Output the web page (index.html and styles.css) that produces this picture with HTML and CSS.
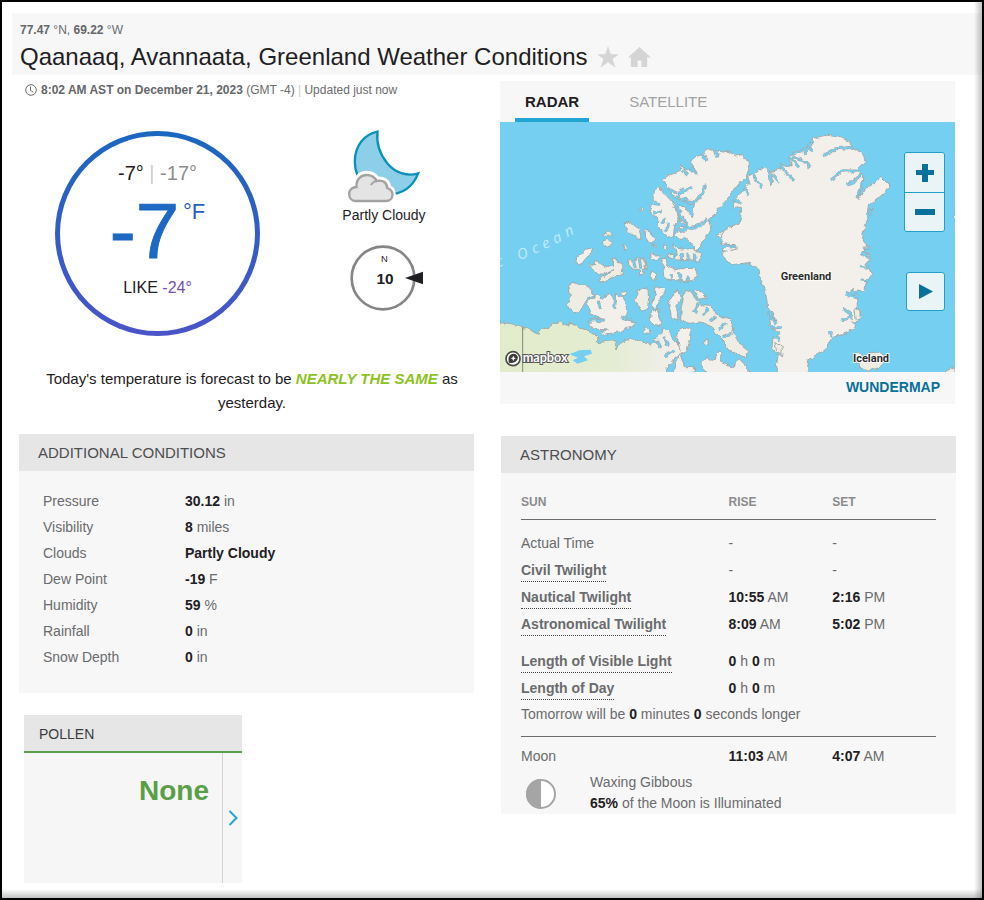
FILE: index.html
```html
<!DOCTYPE html>
<html lang="en">
<head>
<meta charset="utf-8">
<title>Qaanaaq, Avannaata, Greenland Weather Conditions</title>
<link rel="stylesheet" href="styles.css">
</head>
<body>
<div class="frame">
  <header class="place">
    <p class="coords"><b>77.47</b> °N, <b>69.22</b> °W</p>
    <div class="title-row">
      <h1>Qaanaaq, Avannaata, Greenland Weather Conditions</h1>
      <button class="icon-button" aria-label="Favorite"><svg width="22" height="22" viewBox="0 0 24 24"><path d="M12 0l3 9h9l-7 5.300 3 9.200-8-5.800-8 5.800 3-9.200L0 9h9z"/></svg></button>
      <button class="icon-button" aria-label="Set as home"><svg width="23" height="23" viewBox="0 0 24 24"><path d="M12 1L0 12h3v10h7v-7h4v7h6V12h4l-4-3.600z"/></svg></button>
    </div>
  </header>

  <main class="columns">
    <div class="column">
      <p class="stamp">
        <svg width="12" height="12" viewBox="0 0 12 12"><circle cx="6" cy="6" r="5.300"/><path d="M5.500 2.500v4l2.800 1.500"/></svg>
        <span><b>8:02 AM AST on December 21, 2023</b> (GMT -4) <i>|</i> Updated just now</span>
      </p>
      <section class="current">
        <div class="dial">
          <p class="hi-lo">-7° <i>|</i> <span>-17°</span></p>
          <p class="temp">-7<sup>°F</sup></p>
          <p class="feels">LIKE <span>-24°</span></p>
        </div>
        <div class="sky">
          <svg width="77" height="75" viewBox="80 40 230 225">
            <path d="M174 51C135 59 106 92 106 141c0 58 45 98 98 98 44 0 75-20 92-63-30 10-67 0-91-28-22-26-35-62-31-97z" fill="#8dcfe8" stroke="#0c92b8" stroke-width="7"/>
            <path d="M108 259c-12 0-20-10-20-21 0-13 10-22 21-22 0-23 14-38 32-38 14 0 25 7 30 18 20-4 34 8 34 24 9 3 14 10 14 20 0 12-9 19-20 19z" fill="none" stroke="#fff" stroke-width="20"/>
            <path d="M108 259c-12 0-19-10-19-21 0-13 10-21 22-21-2-22 13-36 30-36 14 0 25 7 30 18 19-5 32 6 32 21 9 3 16 10 16 20 0 12-9 19-20 19z" fill="#e4e4e4" stroke="#a2a2a2" stroke-width="7"/>
            <path d="M171 199c-7 1-13 6-17 12" fill="none" stroke="#a2a2a2" stroke-width="6"/>
          </svg>
          <p>Partly Cloudy</p>
          <svg class="wind" width="82" height="70" viewBox="70 386 246 210">
            <circle cx="190" cy="491" r="94" fill="none" stroke="#858585" stroke-width="8"/>
            <path d="M256 491l54-19v38z" fill="#1e2023"/>
            <text class="wind-dir" x="194" y="443">N</text>
            <text class="wind-speed" x="196" y="510">10</text>
          </svg>
        </div>
      </section>
      <p class="outlook">Today's temperature is forecast to be <em>NEARLY THE SAME</em> as yesterday.</p>

      <section class="card conditions">
        <h2>ADDITIONAL CONDITIONS</h2>
        <dl>
          <dt>Pressure</dt><dd><b>30.12</b> in</dd>
          <dt>Visibility</dt><dd><b>8</b> miles</dd>
          <dt>Clouds</dt><dd><b>Partly Cloudy</b></dd>
          <dt>Dew Point</dt><dd><b>-19</b> F</dd>
          <dt>Humidity</dt><dd><b>59</b> %</dd>
          <dt>Rainfall</dt><dd><b>0</b> in</dd>
          <dt>Snow Depth</dt><dd><b>0</b> in</dd>
        </dl>
      </section>

      <section class="pollen">
        <h2>POLLEN</h2>
        <div class="pollen-body">
          <strong>None</strong>
          <button aria-label="Next"><svg width="10" height="16" viewBox="0 0 10 16"><path d="M1.500 1l7 7-7 7"/></svg></button>
        </div>
      </section>
    </div>

    <div class="column">
      <section class="radar">
        <nav class="tabs"><button class="active">RADAR</button><button>SATELLITE</button></nav>
        <div class="map">
          <svg class="chart" viewBox="0 0 1365 750" preserveAspectRatio="xMidYMid slice">
            <defs>
              <filter id="rough" x="-5%" y="-5%" width="110%" height="110%">
                <feTurbulence type="fractalNoise" baseFrequency="0.055" numOctaves="2" seed="7" result="n"/>
                <feDisplacementMap in="SourceGraphic" in2="n" scale="16" xChannelSelector="R" yChannelSelector="G"/>
              </filter>
              <linearGradient id="plain" gradientUnits="userSpaceOnUse" x1="0" y1="0" x2="560" y2="0">
                <stop offset="0" stop-color="#e2ecca"/><stop offset=".6" stop-color="#e4ecd2"/><stop offset=".9" stop-color="#f0eee8"/>
              </linearGradient>
              <g id="inlets">
                <g transform="translate(-6 -6)">
                  <path d="M512 208l30 12 40-18M535 235l22-30M550 240l44 6 20-30 12-24M540 258l12 40 24 26 34-10M570 325l-34 10M600 164l-24-24M624 122l-10-26M660 112l-8-22M470 250l16 4M466 280l22-4M490 308l14-12M500 334l12-22M555 150l12 14M630 296l-20 14"/>
                  <path d="M320 600l-48 4M300 542l8 24M352 540l-2 26M400 600l-30-10M530 400v18M550 400v20M570 398v22M590 400v22M520 462v20M545 460v22M568 464v20M600 550l-10 30M630 564l-14 20M655 590l-18 14M684 610l-20 16M700 640l-26 10M470 660l20 20M500 650l10 30M530 690l-30 20M406 420l6 24M424 416l4 28"/>
                </g>
                <g transform="translate(675 -6)">
                  <path d="M86 164l22 40M134 152l6 40M138 160l24 28M165 136l42 46M190 108l32 34M200 110l50 20 2 14M258 70l-20 34M200 104l50-18 14 10M382 82l-48 4-42 22M414 154l-60-2-36 28M412 160l-30 28-18 4M410 190l-14 44M60 206l10 20M30 240l18 10M430 270l16-2M424 290l14-12M412 384l26 0M410 400l20 14M408 440l22 2M404 480l24 2M362 520l40 12M366 530l20-18 14 20M352 566l24 12 6 20M350 604l30-20M130 580l26 30M136 620l32 4M144 650l20 10M150 700l18 2M320 650l-4-14M4 376l30 4"/>
                </g>
              </g>
            </defs>
            <g filter="url(#rough)">
              <g class="land" transform="translate(-6 -6)">
                <path class="plain" d="M-30 605L30 610 60 616 100 632 120 643 126 628 150 628 163 610 180 610 186 600 195 614 225 610 245 625 270 630 300 650 298 668 330 664 350 662 357 690 366 668 400 655 430 665 460 675 470 655 490 640 497 623 520 640 530 665 545 680 550 700 532 712 522 728 508 740 500 790-30 790z"/>
                <path class="green" d="M218 487L245 492 262 493 290 524 272 532 260 550 248 570 232 580 210 563 207 552 217 520 212 500z"/>
                <path d="M266 548L282 534 300 524 312 538 335 520 355 545 352 520 375 532 386 562 384 590 398 602 412 610 400 622 385 625 365 636 335 640 312 646 308 636 328 630 300 628 282 626 270 606 290 596 320 600 298 588 272 582 275 566z"/>
                <path d="M232 425L243 405 262 388 287 383 282 400 266 412 252 430 238 434z"/>
                <path class="green" d="M280 445L275 430 290 435 288 422 305 425 325 440 345 435 340 412 352 412 360 430 375 436 372 465 350 468 325 482 308 486 306 472 328 465 345 452 320 462 300 462z"/>
                <path class="green" d="M312 345L330 332 342 344 326 346zM314 365L330 358 340 368 334 378 316 382z"/>
                <path class="green" d="M378 304L396 308 412 322 425 330 430 358 418 358 405 344 388 334 378 320z"/>
                <path d="M440 327L455 332 468 360 462 370 444 358zM375 372l8 4 3 14-8 2zM427 264l8 3 0 10-8-2zM500 372l10 2-2 14-8-4zM460 373l16 2-4 4z"/>
                <path class="green" d="M389 416L410 426 415 412 440 418 444 440 430 448 440 464 424 464 425 448 405 448 392 430z"/>
                <path d="M458 402L470 400 484 412 475 420 460 418zM462 450l12 8 2 20-10 4-10-14zM440 438l8 2-2 12z"/>
                <path d="M486 420L504 418 508 436 530 450 548 446 590 445 598 465 588 480 566 484 550 478 530 482 498 476 496 452 500 440z"/>
                <path class="green" d="M527 370L540 385 560 388 580 386 602 390 612 404 602 425 580 420 555 422 530 418 512 414 512 404 535 402z"/>
                <path d="M478 200L490 203 500 222 522 245 535 268 546 296 532 312 526 345 512 352 492 334 478 312 480 292 460 284 457 262 470 245 464 226z"/>
                <path d="M494 180L520 164 548 154 548 134 562 150 576 146 600 164 576 128 592 110 612 105 622 90 650 90 672 96 690 94 716 108 734 104 756 134 748 162 726 188 704 216 682 244 664 262 650 288 634 295 640 322 630 344 610 362 612 380 594 390 578 368 560 352 546 362 530 344 544 322 572 324 550 308 546 290 538 258 560 260 580 290 590 250 562 246 532 232 514 206z"/>
                <path class="green" d="M408 538L420 524 415 512 435 505 450 508 452 540 448 568 430 574 422 560z"/>
                <path d="M470 502L492 500 502 512 488 535 475 565 462 560 470 532zM372 514l12-4-2 18-10-4zM462 570l16-4 12 40-6 14-20-4-8-14z"/>
                <path d="M526 520L544 508 548 530 536 560 540 600 520 592 512 550z"/>
                <path class="green" d="M562 512L578 514 590 535 610 554 640 556 652 580 672 590 700 600 706 640 724 670 752 690 744 712 714 700 690 690 680 665 655 640 640 615 605 606 575 610 548 602 550 560z"/>
                <path d="M586 512L610 514 626 534 600 538z"/>
                <path d="M552 622L580 626 578 655 566 692 548 700 540 664 536 648zM622 658l10 0 2 14-10 2zM610 730l20-20 15 14 20 -34 10 6-8 30 30 14 30-20 20 20 10 50-120 0z"/>
                <path d="M545 700L560 740 590 740 588 770 520 780 530 740zM440 620l18 8-2 16-20-4z"/>
                <path d="M656 345L700 318 726 312 730 370 760 430 700 420 692 405 672 390 690 372z"/>
              </g>
              <g class="land" transform="translate(675 -6)">
                <path d="M-10 345L5 322 42 310 48 290 46 262 24 262 30 235 50 215 72 190 66 170 90 158 122 140 135 155 162 148 165 132 185 140 200 132 188 108 215 92 240 88 262 72 262 55 305 46 340 50 378 66 382 84 410 98 424 124 400 146 414 158 412 184 402 236 432 196 456 184 470 170 496 196 485 212 458 236 444 248 430 256 426 290 418 320 412 360 430 380 410 400 432 404 436 420 420 430 434 450 440 464 422 490 420 514 396 510 382 520 402 544 388 560 408 575 400 604 380 606 395 616 372 636 320 655 300 690 270 708 252 718 244 770 160 780 154 730 160 706 140 690 144 656 166 640 136 620 130 600 156 600 140 574 128 560 122 520 108 480 100 444 70 428 20 434-5 410-10 400 34 388 30 374-10 372z"/>
                <path class="green" d="M394 722L384 710 400 696 418 712 435 698 464 696 480 710 484 724 460 744 436 752 410 744zM660 755l30-16v30zM686 290l10-6v16z"/>
                <path class="green" d="M388 560L404 572 406 592 394 600zM150 668l22 12-2 30-14-6z"/>
              </g>
              <use class="inlet-bank" href="#inlets"/>
              <use class="inlet-water" href="#inlets"/>
            </g>
            <path class="lake" d="M208 697l30-12 34-2 4 12-24 8 12 12-32 10-14-10 16-8zM664 676l10 14-10 6z"/>
            <path d="M68 616v140" stroke="#7e8a7c" stroke-width="3"/>
            <g class="ocean">
              <text transform="translate(-8 436) rotate(-16)">c</text>
              <text transform="translate(56 414) rotate(-17)">O</text>
              <text transform="translate(101 396) rotate(-21)">c</text>
              <text transform="translate(133 382) rotate(-24)">e</text>
              <text transform="translate(166 366) rotate(-25)">a</text>
              <text transform="translate(202 346) rotate(-27)">n</text>
            </g>
            <text class="label" x="918" y="474">Greenland</text>
            <text class="label" x="1113" y="720">Iceland</text>
            <circle cx="39" cy="710" r="21" fill="#fff" stroke="#4a4a4a" stroke-width="5"/>
            <path d="M27 722c-4-14 0-26 13-27 12 0 17 12 11 20-6 7-14 9-24 7z" fill="#3c3c3c"/>
            <path d="M40 701l3 6 5 2-5 2-3 6-3-6-5-2 5-2z" fill="#fff"/>
            <text class="brand" x="68" y="719">mapbox</text>
          </svg>
          <div class="map-controls">
            <div class="zoom">
              <button aria-label="Zoom in"><svg width="18" height="18" viewBox="0 0 18 18"><path d="M6 0h6v6h6v5h-6v7H6v-7H0V6h6z"/></svg></button>
              <button aria-label="Zoom out"><svg width="20" height="6" viewBox="0 0 20 6"><path d="M0 0h20v6H0z"/></svg></button>
            </div>
            <button class="play" aria-label="Play"><svg width="14" height="15" viewBox="0 0 14 15"><path d="M0 0l14 7.500L0 15z"/></svg></button>
          </div>
        </div>
        <a class="wundermap" href="#">WUNDERMAP</a>
      </section>

      <section class="card astronomy">
        <h2>ASTRONOMY</h2>
        <table>
          <thead><tr><th>SUN</th><th>RISE</th><th>SET</th></tr></thead>
          <tbody>
            <tr><td>Actual Time</td><td>-</td><td>-</td></tr>
            <tr><td><abbr>Civil Twilight</abbr></td><td>-</td><td>-</td></tr>
            <tr><td><abbr>Nautical Twilight</abbr></td><td><b>10:55</b> AM</td><td><b>2:16</b> PM</td></tr>
            <tr><td><abbr>Astronomical Twilight</abbr></td><td><b>8:09</b> AM</td><td><b>5:02</b> PM</td></tr>
          </tbody>
          <tbody>
            <tr><td><abbr>Length of Visible Light</abbr></td><td><b>0</b> h <b>0</b> m</td><td></td></tr>
            <tr><td><abbr>Length of Day</abbr></td><td><b>0</b> h <b>0</b> m</td><td></td></tr>
            <tr><td colspan="3">Tomorrow will be <b>0</b> minutes <b>0</b> seconds longer</td></tr>
          </tbody>
          <tbody class="moon-times">
            <tr><td>Moon</td><td><b>11:03</b> AM</td><td><b>4:07</b> AM</td></tr>
          </tbody>
        </table>
        <div class="moon">
          <svg width="30" height="30" viewBox="0 0 30 30"><circle cx="15" cy="15" r="14" fill="#fff" stroke="#a5a5a5" stroke-width="2"/><path d="M15 0v30a15 15 0 0 1 0-30z" fill="#a5a5a5"/></svg>
          <p>Waxing Gibbous<br><b>65%</b> of the Moon is Illuminated</p>
        </div>
      </section>
    </div>
  </main>
</div>
</body>
</html>
```
FILE: styles.css
```css
* { box-sizing: border-box; margin: 0; }
body { font-family: "Liberation Sans", Arial, sans-serif; font-size: 14px; color: #6a6b6d; background: #fff; }
button { border: 0; padding: 0; background: none; font: inherit; color: inherit; cursor: pointer; }
svg { display: block; }
b { color: #1e2023; }

.frame { position: relative; min-height: 100vh; border: 2px solid #000; padding: 11px 0 0 10px; }
.frame::after {
  content: ""; position: absolute; inset: 0; pointer-events: none;
  background:
    linear-gradient(to left, rgba(0,0,0,.24), rgba(0,0,0,0)) right / 8px 100% no-repeat,
    linear-gradient(to top, rgba(0,0,0,.24), rgba(0,0,0,0)) bottom / 100% 9px no-repeat;
}

.place { background: #f7f7f7; height: 62px; padding: 8px 8px 0; }
.coords { font-size: 12px; line-height: 18px; }
.coords b, .stamp b { color: #65676a; }
.title-row { display: flex; align-items: center; gap: 9px; height: 36px; }
h1 { font-size: 24px; font-weight: 400; line-height: 36px; color: #1e2023; }
.icon-button svg { fill: #d5d5d5; }

.columns { display: grid; grid-template-columns: 1fr 1fr; gap: 26px; padding: 6px 27px 0 7px; }
.column { min-width: 0; }

.stamp { display: flex; align-items: center; gap: 4px; padding-left: 6px; font-size: 12px; line-height: 18px; }
.stamp svg { fill: none; stroke: #6a6b6d; }
.stamp i, .hi-lo i { font-style: normal; color: #ccc; }

.current { display: flex; padding: 32px 0 0 36px; }
.dial {
  width: 205px; height: 205px; flex: none; border: 5px solid transparent; border-radius: 50%;
  background: linear-gradient(#fff, #fff) padding-box, linear-gradient(#1a67c0, #4a54c8) border-box;
  text-align: center; padding-top: 25px;
}
.hi-lo { font-size: 20px; line-height: 24px; color: #1e2023; }
.hi-lo span { color: #8c8c8c; }
.temp { display: flex; justify-content: center; font-size: 78px; line-height: 92px; color: #1c68c3; -webkit-text-stroke: 1px #1c68c3; }
.temp sup { font-size: 22px; line-height: 24px; padding: 15px 0 0 4px; color: #2a5fbf; -webkit-text-stroke: 0; }
.feels { font-size: 16px; line-height: 22px; color: #1e2023; }
.feels span { color: #7350b5; }
.sky { flex: 1; display: flex; flex-direction: column; align-items: center; padding-left: 34px; margin-top: -3px; }
.sky p { font-size: 14px; line-height: 24px; color: #1e2023; }
.wind { margin-top: 16px; }
.wind text { text-anchor: middle; fill: #1e2023; }
.wind .wind-dir { font-size: 28px; }
.wind .wind-speed { font-size: 46px; font-weight: 700; }

.outlook { padding: 31px 0 19px 11px; text-align: center; font-size: 15px; line-height: 24px; color: #1e2023; }
.outlook em { font-weight: 700; color: #8cc21f; }

.card { background: #f7f7f7; }
.card h2 { background: #e6e6e6; height: 37px; line-height: 37px; padding: 0 19px; font-size: 15px; font-weight: 400; color: #4c4e50; }
.conditions dl { display: grid; grid-template-columns: 142px 1fr; padding: 17px 24px 23px; line-height: 26px; }
.conditions dd { margin: 0; }

.pollen { width: 218px; margin: 22px 0 0 5px; background: #f6f6f6; }
.pollen h2 { background: #e6e6e6; border-bottom: 2px solid #5c9c50; height: 38px; line-height: 38px; padding-left: 15px; font-size: 14px; font-weight: 400; color: #3a3c3e; }
.pollen-body { display: flex; height: 130px; }
.pollen strong { flex: 1; padding: 20px 13px 0 0; text-align: right; font-size: 28px; line-height: 36px; color: #5a9f48; }
.pollen button { width: 20px; border-left: 1px solid #d2d2d2; display: grid; place-items: center; }
.pollen button svg { fill: none; stroke: #27a3d4; stroke-width: 2; }

.radar { background: #f7f7f7; }
.tabs { display: flex; height: 41px; padding-left: 15px; gap: 30px; font-size: 15px; color: #a2a2a2; }
.tabs button { padding: 4px 10px 0; border-bottom: 4px solid transparent; }
.tabs .active { font-weight: 700; color: #1e2023; border-color: #22a5d2; }
.map { position: relative; height: 250px; background: #74cff0; overflow: hidden; }
.chart { width: 100%; height: 100%; }
.land path { fill: #f3efeb; stroke: #a3a9a8; stroke-width: 3; }
.land .green { fill: #eeece3; }
.land .plain { fill: url(#plain); }
.inlet-bank { fill: none; stroke: #a3a9a8; stroke-width: 9; }
.inlet-water { fill: none; stroke: #74cff0; stroke-width: 5; }
.lake { fill: #74cff0; }
.ocean { font: italic 44px "Open Sans", sans-serif; fill: #c3eafa; }
.label { font: 700 33px Roboto, sans-serif; text-anchor: middle; fill: #2c2c2c; stroke: #fff; stroke-width: 5; paint-order: stroke; }
.brand { font: 700 38px Lato, sans-serif; fill: #fff; stroke: #555; stroke-width: 6; paint-order: stroke; }
.map-controls { position: absolute; top: 30px; right: 10px; display: flex; flex-direction: column; align-items: flex-end; gap: 40px; }
.map-controls svg { fill: #07709b; }
.map-controls button { display: grid; place-items: center; background: #eaf3f6; }
.zoom { border: 1px solid #22a0c9; border-radius: 3px; overflow: hidden; }
.zoom button { width: 39px; height: 39px; }
.zoom button + button { border-top: 1px solid #22a0c9; }
.map-controls .play { width: 39px; height: 39px; border: 1px solid #22a0c9; border-radius: 3px; }
.wundermap { display: block; padding-right: 15px; text-align: right; font-size: 14px; font-weight: 700; line-height: 30px; padding-bottom: 2px; color: #07709b; text-decoration: none; }

.astronomy { margin: 32px -1px 0 1px; }
.astronomy table { width: calc(100% - 40px); margin: 0 20px; border-collapse: collapse; table-layout: fixed; }
.astronomy th { height: 46px; padding: 12px 0 0; text-align: left; font-size: 12px; font-weight: 700; color: #8a8b8d; border-bottom: 1px solid #6a6b6d; }
.astronomy th:first-child { width: 50%; }
.astronomy td { height: 27px; padding: 0; line-height: 18px; }
.astronomy tbody tr:first-child td { height: 37px; padding-top: 11px; }
.astronomy tbody:last-child { border-top: 1px solid #6a6b6d; }
.astronomy .moon-times tr:first-child td { height: 33px; padding-top: 7px; }
.astronomy tbody:nth-child(3) tr:last-child td { height: 35px; padding-bottom: 8px; }
.astronomy abbr { font-weight: 700; padding-bottom: 3px; border-bottom: 1px dotted #444; }
.moon { display: flex; gap: 34px; padding: 3px 25px 0; line-height: 21px; }
.moon svg { margin-top: 7px; }
```
